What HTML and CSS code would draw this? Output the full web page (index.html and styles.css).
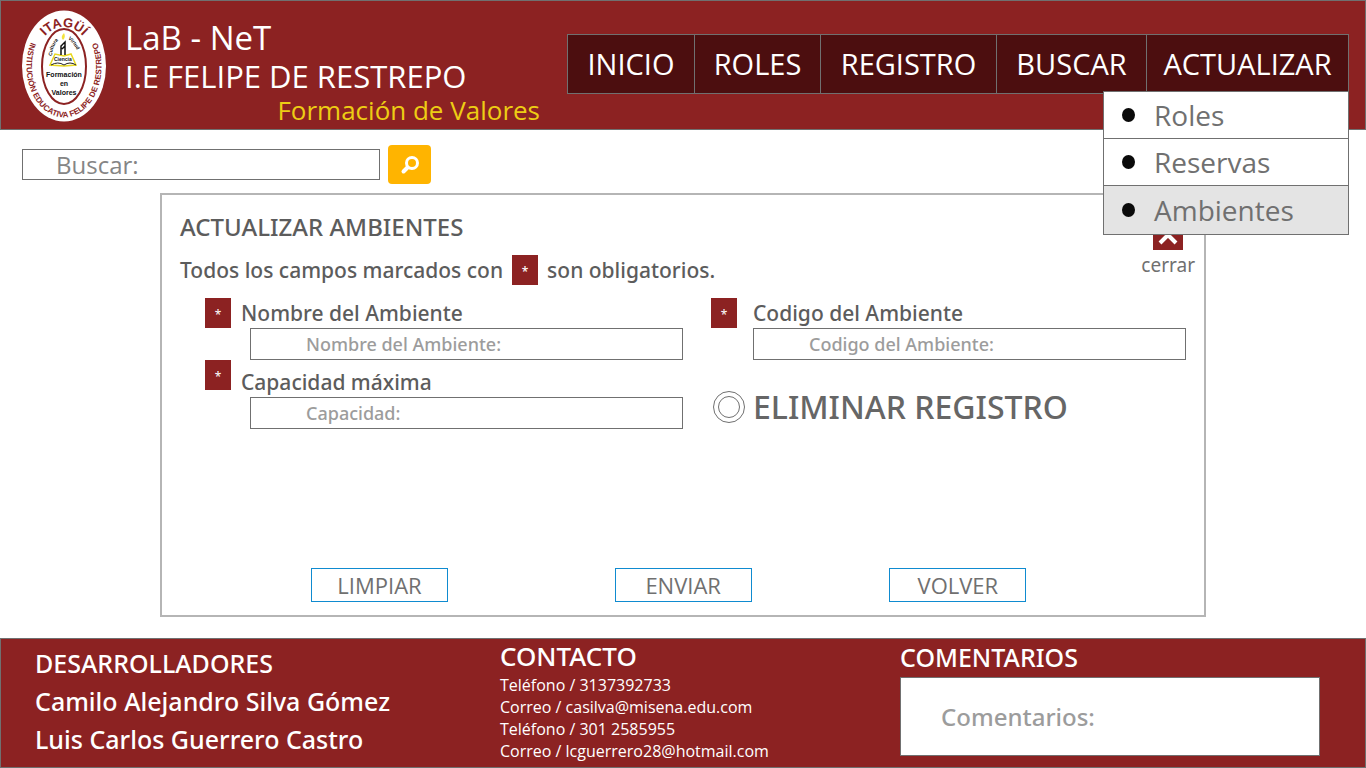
FILE: index.html
```html
<!DOCTYPE html>
<html lang="es">
<head>
<meta charset="utf-8">
<meta name="viewport" content="width=device-width, initial-scale=1">
<title>LaB - NeT | Actualizar ambientes</title>
<link rel="stylesheet" href="styles.css">
</head>
<body>
<header class="header">
  <svg class="logo" viewBox="0 0 86 112" role="img" aria-label="Institución Educativa Felipe de Restrepo">
    <defs>
      <path id="ring-top" d="M13 57A30 40 0 0 1 73 57"/>
      <path id="ring-bottom" d="M14 24A37.500 51 0 1 0 72 24"/>
      <path id="word-left" d="M31 46Q31 36 40 27"/>
      <path id="word-right" d="M47 29Q54 34 58 45"/>
    </defs>
    <ellipse cx="43" cy="56" rx="42" ry="55.500" fill="#fff"/>
    <ellipse cx="43" cy="56.500" rx="22" ry="37.500" fill="#fff" stroke="#8c2222" stroke-width="2"/>
    <text class="logo-town"><textPath href="#ring-top" startOffset="50%">ITAGÜÍ</textPath></text>
    <text class="logo-name"><textPath href="#ring-bottom" startOffset="50%">INSTITUCIÓN EDUCATIVA FELIPE DE RESTREPO</textPath></text>
    <path d="M29 55L34 44L43 46L50 44L55 55L43 56Z" fill="#fff" stroke="#e8d820" stroke-width="1.500"/>
    <path d="M30 55Q37 51 43 55Q49 51 55 55" fill="none" stroke="#222" stroke-width="1"/>
    <path d="M40 45V36L44 32V45M44 36L41 39" fill="none" stroke="#111" stroke-width="1.500"/>
    <path d="M42 30Q39 27 43 23Q45 27 42 30Z" fill="#f2e23a"/>
    <text class="logo-word"><textPath href="#word-left">Cultura</textPath></text>
    <text class="logo-word"><textPath href="#word-right">Virtud</textPath></text>
    <text class="logo-word" x="33" y="51">Ciencia</text>
    <text class="logo-motto" x="43" y="67">Formación</text>
    <text class="logo-motto" x="43" y="76">en</text>
    <text class="logo-motto" x="43" y="85">Valores</text>
  </svg>
  <div class="brand">
    <h1 class="brand-title">LaB - NeT</h1>
    <p class="brand-school">I.E FELIPE DE RESTREPO</p>
    <p class="brand-motto">Formación de Valores</p>
  </div>
  <nav class="nav" aria-label="Principal">
    <a class="nav-link" href="#">INICIO</a>
    <a class="nav-link" href="#">ROLES</a>
    <a class="nav-link" href="#">REGISTRO</a>
    <a class="nav-link" href="#">BUSCAR</a>
    <div class="nav-group">
      <a class="nav-link" href="#">ACTUALIZAR</a>
      <ul class="menu">
        <li><a class="menu-link" href="#">Roles</a></li>
        <li><a class="menu-link" href="#">Reservas</a></li>
        <li><a class="menu-link menu-link-active" href="#">Ambientes</a></li>
      </ul>
    </div>
  </nav>
</header>

<main class="main">
  <form class="search" role="search">
    <input class="box search-box" type="search" placeholder="Buscar:" aria-label="Buscar">
    <button class="search-button" type="button" aria-label="Buscar">
      <svg width="20" height="20" viewBox="0 0 20 20" fill="none" stroke="#fff" stroke-linecap="round"><circle cx="12" cy="8" r="5.500" stroke-width="3"/><path d="M7.500 12.500L3.500 16.500" stroke-width="4"/></svg>
    </button>
  </form>

  <form class="panel">
    <div class="panel-head">
      <div>
        <h2 class="panel-title">ACTUALIZAR AMBIENTES</h2>
        <p class="panel-note">Todos los campos marcados con <span class="star">*</span> son obligatorios.</p>
      </div>
      <button class="close" type="button">
        <svg class="close-icon" viewBox="0 0 30 30"><path d="M7 7L23 23M23 7L7 23" stroke="#fff" stroke-width="4"/></svg>
        cerrar
      </button>
    </div>

    <div class="fields">
      <div class="field">
        <span class="star">*</span>
        <label class="field-label" for="nombre">Nombre del Ambiente</label>
        <input class="box field-box" id="nombre" type="text" placeholder="Nombre del Ambiente:">
      </div>
      <div class="field field-right">
        <span class="star">*</span>
        <label class="field-label" for="codigo">Codigo del Ambiente</label>
        <input class="box field-box" id="codigo" type="text" placeholder="Codigo del Ambiente:">
      </div>
      <div class="field field-low">
        <span class="star">*</span>
        <label class="field-label" for="capacidad">Capacidad máxima</label>
        <input class="box field-box" id="capacidad" type="text" placeholder="Capacidad:">
      </div>
      <label class="remove"><input class="remove-radio" type="radio" name="eliminar">ELIMINAR REGISTRO</label>
    </div>

    <div class="actions">
      <button class="action" type="reset">LIMPIAR</button>
      <button class="action" type="button">ENVIAR</button>
      <button class="action" type="button">VOLVER</button>
    </div>
  </form>
</main>

<footer class="footer">
  <section class="team">
    <h2 class="team-title">DESARROLLADORES</h2>
    <p>Camilo Alejandro Silva Gómez</p>
    <p>Luis Carlos Guerrero Castro</p>
  </section>
  <section class="contact">
    <h2 class="footer-title">CONTACTO</h2>
    <p>Teléfono / 3137392733</p>
    <p>Correo / casilva@misena.edu.com</p>
    <p>Teléfono / 301 2585955</p>
    <p>Correo / lcguerrero28@hotmail.com</p>
  </section>
  <section class="comments">
    <h2 class="footer-title"><label for="comentarios">COMENTARIOS</label></h2>
    <textarea class="comments-box" id="comentarios" rows="1" placeholder="Comentarios:"></textarea>
  </section>
</footer>
</body>
</html>
```

FILE: styles.css
```css
*, *::before { box-sizing: border-box; }

body {
  margin: 0;
  min-height: 100vh;
  display: flex;
  flex-direction: column;
  background: #fff;
  color: #5c5c5c;
  font-family: "Open Sans", "Noto Sans", sans-serif;
}

h1, h2, p, ul { margin: 0; padding: 0; font-weight: 400; }
ul { list-style: none; }
a { color: inherit; text-decoration: none; }
button, input, textarea { font-family: inherit; border-radius: 0; }

/* Header */
.header {
  display: flex;
  align-items: flex-start;
  padding: 9px 16px 4px 20px;
  border: 1px solid #707070;
  background: #8c2222;
  color: #fff;
}
.logo { flex: none; width: 86px; height: 112px; }
.logo text { font-family: "Liberation Sans", sans-serif; font-weight: 700; }
.logo-town { font-size: 13px; fill: #8c2222; text-anchor: middle; }
.logo-name { font-size: 8px; fill: #8c2222; text-anchor: middle; }
.logo-word { font-size: 5px; fill: #111; }
.logo-motto { font-size: 7px; fill: #111; text-anchor: middle; }

.brand { flex: none; width: 415px; margin: 9px 27px 0 18px; line-height: 38px; }
.brand-title { font-size: 33px; }
.brand-school { font-size: 31px; }
.brand-motto { font-size: 26px; line-height: 30px; color: #edcd14; text-align: right; }

.nav {
  flex: 1;
  display: grid;
  grid-template-columns: 127fr 126fr 176fr 150fr 202fr;
  margin-top: 24px;
  border: 1px solid #707070;
  border-left: 0;
  background: #4c0e0f;
  font-size: 29px;
  line-height: 58px;
}
.nav-link { display: block; border-left: 1px solid #707070; text-align: center; }
.nav-group { position: relative; }
.menu {
  position: absolute;
  top: 56px;
  right: -1px;
  width: 246px;
  border: 1px solid #707070;
  border-bottom: 0;
  background: #fff;
  color: #707070;
  font-size: 28px;
  line-height: 46px;
}
.menu-link { display: flex; align-items: center; gap: 19px; padding-left: 18px; border-bottom: 1px solid #707070; }
.menu-link::before { content: ""; width: 13px; height: 14px; border-radius: 50%; background: #0a0a0a; }
.menu-link-active { background: #e4e4e4; line-height: 48px; }

/* Search */
.main { flex: 1; display: flex; flex-direction: column; }
.search { display: flex; align-items: center; gap: 8px; padding: 15px 22px 9px; }
.box { border: 1px solid #707070; background: #fff; color: #5c5c5c; padding: 0 8px 0 55px; outline-offset: 2px; }
.box::placeholder { color: #9c9c9c; opacity: 1; }
.search-box { width: 358px; height: 31px; padding-left: 33px; font-size: 24px; appearance: none; }
.search-box::placeholder { color: #858585; }
.search-button {
  display: grid;
  place-items: center;
  width: 43px;
  height: 39px;
  padding: 0;
  border: 0;
  border-radius: 4px;
  background: #ffb400;
}

/* Panel */
.panel {
  flex: 1;
  display: flex;
  flex-direction: column;
  margin: 0 160px 21px;
  padding: 16px 9px 13px 18px;
  border: 2px solid #b5b5b5;
  font-family: "Noto Sans", "Open Sans", sans-serif;
}
.panel-head { display: flex; justify-content: space-between; align-items: flex-start; }
.panel-title { font-size: 24px; line-height: 32px; font-weight: 500; }
.panel-note { display: flex; gap: 9px; margin-top: 12px; font-size: 21px; line-height: 30px; font-weight: 500; }
.star {
  flex: none;
  width: 26px;
  height: 30px;
  background: #8c2222;
  color: #fff;
  font-size: 12px;
  line-height: 34px;
  text-align: center;
}
.close {
  display: flex;
  flex-direction: column;
  align-items: center;
  margin-top: 9px;
  padding: 0;
  border: 0;
  background: none;
  color: #707070;
  font-size: 19px;
  line-height: 30px;
}
.close-icon { width: 30px; height: 30px; background: #8c2222; }

.fields {
  display: grid;
  grid-template-columns: 478fr 475fr;
  column-gap: 28px;
  margin: 13px 9px 0 25px;
}
.field { display: grid; grid-template-columns: 36px 9px 1fr; align-items: start; }
.field-label { grid-column: 2 / 4; font-size: 21px; line-height: 30px; font-weight: 500; }
.field-box { grid-column: 3; height: 32px; font-size: 18px; font-weight: 500; }
.field-right { grid-template-columns: 42px 0 1fr; }
.field-low .field-label { padding-top: 7px; }
.remove { display: flex; align-items: center; gap: 8px; padding: 25px 0 0 2px; font-size: 32px; line-height: 40px; font-weight: 500; color: #666; }
.remove-radio {
  appearance: none;
  width: 32px;
  height: 32px;
  margin: 0;
  padding: 4px;
  border: 1px solid #707070;
  border-radius: 50%;
}
.remove-radio::before { content: ""; display: block; height: 100%; border: 1px solid #707070; border-radius: 50%; }
.remove-radio:checked::before { background: #707070; }

.actions { display: grid; grid-template-columns: 304fr 275fr 306fr; margin: auto 0 0 131px; padding-top: 20px; }
.action {
  width: 137px;
  height: 34px;
  padding: 0;
  border: 1px solid #0f8bd0;
  background: #fff;
  color: #707070;
  font-family: "Open Sans", "Noto Sans", sans-serif;
  font-size: 22px;
  line-height: 32px;
}

/* Footer */
.footer {
  display: grid;
  grid-template-columns: 465fr 400fr 420fr;
  padding: 0 45px 5px 34px;
  border: 1px solid #707070;
  background: #8c2222;
  color: #fff;
}
.team { padding-top: 5px; font-family: "Noto Sans", "Open Sans", sans-serif; font-size: 25px; line-height: 38px; }
.team p { font-weight: 500; }
.team-title { font-size: 25px; font-weight: 500; }
.contact { font-size: 16px; line-height: 22px; }
.footer-title { font-family: "Noto Sans", "Open Sans", sans-serif; font-size: 25px; line-height: 35px; font-weight: 500; }
.contact .footer-title { font-size: 26px; }
.comments { display: flex; flex-direction: column; }
.comments .footer-title { line-height: 36px; margin-bottom: 2px; }
.comments-box {
  display: block;
  width: 100%;
  height: 79px;
  padding: 22px 40px;
  border: 1px solid #707070;
  background: #fff;
  color: #5c5c5c;
  font-family: "Noto Sans", "Open Sans", sans-serif;
  font-size: 24px;
  line-height: 33px;
  font-weight: 500;
  resize: none;
}
.comments-box::placeholder { color: #9c9c9c; opacity: 1; }
```
